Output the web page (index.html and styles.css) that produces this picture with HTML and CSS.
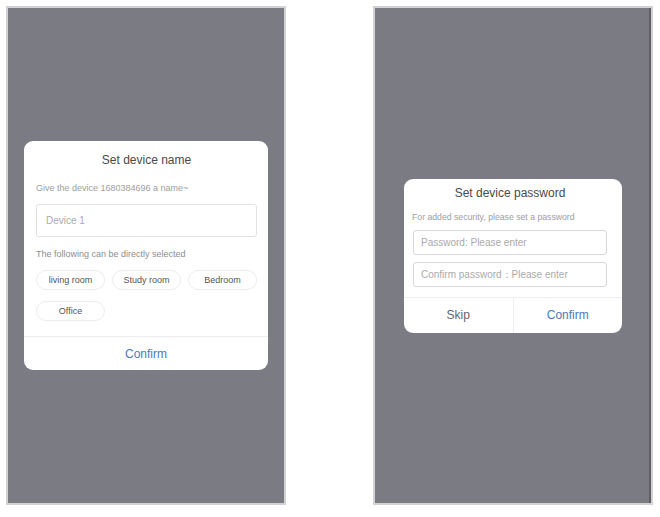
FILE: index.html
```html
<!DOCTYPE html>
<html>
<head>
	<title>Device setup</title>
	<link rel="stylesheet" href="styles.css">
</head>
<body>
	<div class="pantallas">
		<div class="telefono">
			<div class="dialogo dialogoNombre">
				<div class="titulo">Set device name</div>
				<div class="ayuda">Give the device 1680384696 a name~</div>
				<div class="campo campoGrande">Device 1</div>
				<div class="ayuda etiqueta">The following can be directly selected</div>
				<div class="opciones">
					<span class="chip">living room</span>
					<span class="chip">Study room</span>
					<span class="chip">Bedroom</span>
					<span class="chip">Office</span>
				</div>
				<div class="acciones">
					<span class="boton azul">Confirm</span>
				</div>
			</div>
		</div>
		<div class="telefono telefonoDerecha">
			<div class="dialogo dialogoClave">
				<div class="titulo">Set device password</div>
				<div class="ayuda">For added security, please set a password</div>
				<div class="campo primerCampo">Password: Please enter</div>
				<div class="campo">Confirm password：Please enter</div>
				<div class="acciones">
					<span class="boton gris">Skip</span>
					<span class="boton azul">Confirm</span>
				</div>
			</div>
		</div>
	</div>
</body>
</html>
```

FILE: styles.css
```css
body
{
	margin: 0;
	background-color: white;
	font-family: "Liberation Sans", Arial, sans-serif;
}
.pantallas
{
	display: flex;
	gap: 87px;
	padding: 6px 0 0 6px;
}
.telefono
{
	width: 280px;
	height: 499px;
	box-sizing: border-box;
	border: 2px solid #d2d2d5;
	background-color: #7a7b83;
	display: flex;
	align-items: center;
	justify-content: center;
}
.telefonoDerecha
{
	box-shadow: inset -2px 0 0 #5d5e64;
}
.dialogo
{
	background-color: white;
	border-radius: 9px;
	display: flex;
	flex-direction: column;
}
.dialogoNombre
{
	width: 244px;
	padding: 12px 11px 0 12px;
	box-sizing: border-box;
}
.dialogoClave
{
	width: 218px;
	padding: 7px 15px 0 9px;
	box-sizing: border-box;
}
.titulo
{
	font-size: 12px;
	line-height: 15px;
	color: #4a4a4a;
	text-align: center;
}
.ayuda
{
	font-size: 9px;
	line-height: 12px;
	color: #9e9e9e;
	margin-top: 14px;
	white-space: nowrap;
}
.dialogoClave .ayuda
{
	margin-top: 10px;
	margin-left: -1px;
	font-size: 8.7px;
}
.campo
{
	box-sizing: border-box;
	border: 1px solid #d8d8d8;
	border-radius: 3px;
	font-size: 10px;
	color: #aaa;
	height: 25px;
	line-height: 23px;
	padding-left: 7px;
	margin-top: 7px;
	white-space: nowrap;
}
.primerCampo
{
	margin-top: 7px;
}
.campoGrande
{
	height: 33px;
	line-height: 31px;
	padding-left: 9px;
	margin-top: 10px;
	border-color: #e2e2e2;
}
.etiqueta
{
	margin-top: 11px;
	color: #8e8e8e;
}
.opciones
{
	display: grid;
	grid-template-columns: repeat(3, 1fr);
	gap: 11px 7px;
	margin-top: 10px;
}
.chip
{
	box-sizing: border-box;
	height: 20px;
	line-height: 18px;
	border: 1px solid #ececec;
	border-radius: 10px;
	text-align: center;
	font-size: 9px;
	color: #555;
}
.acciones
{
	display: flex;
	border-top: 1px solid #ededed;
}
.dialogoNombre .acciones
{
	margin: 15px -11px 0 -12px;
	height: 33px;
}
.dialogoClave .acciones
{
	margin: 10px -15px 0 -9px;
	height: 35px;
}
.boton
{
	flex: 1;
	display: flex;
	align-items: center;
	justify-content: center;
	font-size: 12px;
}
.boton + .boton
{
	border-left: 1px solid #ededed;
}
.azul
{
	color: #4d78c0;
}
.gris
{
	color: #666;
}
```
